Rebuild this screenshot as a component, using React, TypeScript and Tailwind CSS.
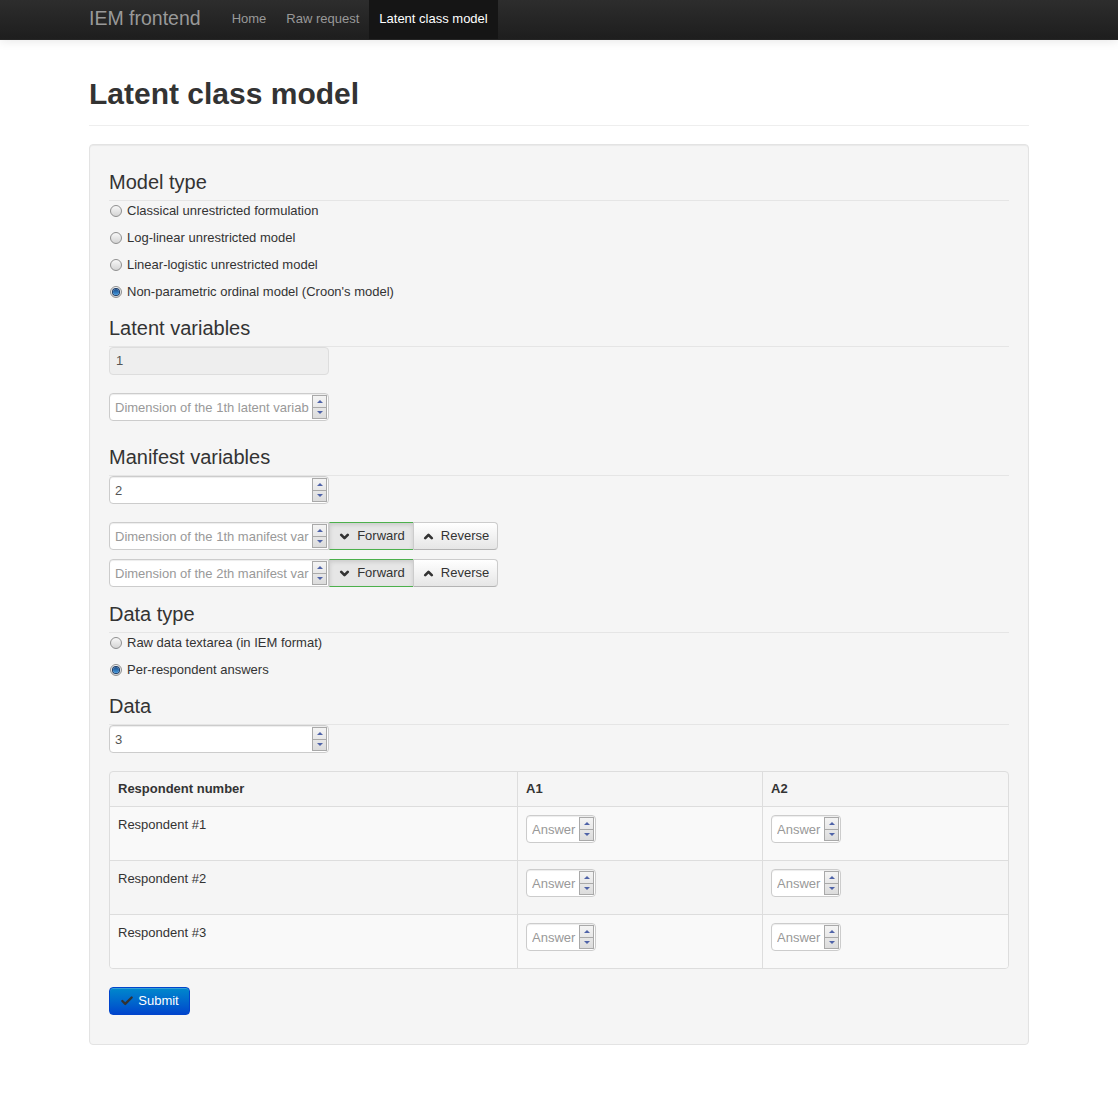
import React from "react";
import { ChevronDown, ChevronUp, Check } from "lucide-react";

const Spinner = () => (
  <div className="flex flex-col w-[15px] h-[24px] border border-[#a9a9a9] bg-gradient-to-b from-[#f4f4f4] to-[#dcdcdc] shrink-0">
    <div className="flex-1 flex items-center justify-center border-b border-[#a9a9a9]">
      <span className="w-0 h-0 border-l-[3px] border-r-[3px] border-b-[3px] border-l-transparent border-r-transparent border-b-[#4f63a8]" />
    </div>
    <div className="flex-1 flex items-center justify-center">
      <span className="w-0 h-0 border-l-[3px] border-r-[3px] border-t-[3px] border-l-transparent border-r-transparent border-t-[#4f63a8]" />
    </div>
  </div>
);

const NumberInput = ({
  value,
  placeholder,
  width = "w-[220px]",
  rounded = "rounded-[4px]",
}: {
  value?: string;
  placeholder?: string;
  width?: string;
  rounded?: string;
}) => (
  <div
    className={`flex items-center h-[28px] ${width} ${rounded} border border-[#cccccc] bg-white shadow-[inset_0_1px_1px_rgba(0,0,0,0.075)] shrink-0`}
  >
    <input
      type="text"
      defaultValue={value}
      placeholder={placeholder}
      className="flex-1 min-w-0 h-full pl-[5px] text-[13px] text-[#555] placeholder:text-[#999] bg-transparent outline-none"
    />
    <div className="mr-[1px]">
      <Spinner />
    </div>
  </div>
);

const Legend = ({
  children,
  gap = "",
}: {
  children: React.ReactNode;
  gap?: string;
}) => (
  <div
    className={`text-[20px] leading-[36px] text-[#333] border-b border-[#e5e5e5] ${gap}`}
  >
    {children}
  </div>
);

const Radio = ({ label, checked }: { label: string; checked?: boolean }) => (
  <label className="flex items-center h-[18px] mb-[9px] text-[13px] text-[#333]">
    <span className="ml-[1px] w-[12px] h-[12px] rounded-full border border-[#8f8f8f] bg-gradient-to-b from-[#f8f8f8] to-[#d4d4d4] flex items-center justify-center">
      {checked && (
        <span className="w-[6px] h-[6px] rounded-full bg-gradient-to-b from-[#1d4f8c] to-[#3f97de] shadow-[0_0_0_1px_#1a3b66]" />
      )}
    </span>
    <span className="ml-[5px]">{label}</span>
  </label>
);

const ManifestRow = ({ n }: { n: number }) => (
  <div className="flex h-[28px]">
    <NumberInput
      placeholder={`Dimension of the ${n}th manifest var`}
      rounded="rounded-l-[4px]"
    />
    <button className="w-[84px] h-[28px] flex items-center justify-center gap-[6px] bg-[#e6e6e6] border-y border-[#4cb04c] border-l border-l-[#cccccc] shadow-[inset_0_2px_4px_rgba(0,0,0,0.12)] text-[13px] text-[#333]">
      <ChevronDown size={13} strokeWidth={5} color="#333" />
      Forward
    </button>
    <button className="w-[85px] h-[28px] flex items-center justify-center gap-[6px] bg-gradient-to-b from-white to-[#e6e6e6] border border-[#cccccc] border-b-[#b3b3b3] rounded-r-[4px] text-[13px] text-[#333]">
      <ChevronUp size={13} strokeWidth={5} color="#333" />
      Reverse
    </button>
  </div>
);

export default function App() {
  const rows = [1, 2, 3];
  return (
    <div className="min-h-screen bg-white font-['Liberation_Sans',Arial,sans-serif]">
      <div className="h-[40px] bg-gradient-to-b from-[#2d2d2d] to-[#1e1e1e] border-b border-[#252525] shadow-[0_1px_10px_rgba(0,0,0,0.1)]">
        <div className="w-[940px] mx-auto flex h-full items-stretch">
          <div className="flex items-center text-[19.5px] text-[#999] mr-[21px] -mt-[2px]">
            IEM frontend
          </div>
          <div className="flex items-center px-[10px] text-[13px] text-[#999] -mt-[2px]">
            Home
          </div>
          <div className="flex items-center px-[10px] text-[13px] text-[#999] -mt-[2px]">
            Raw request
          </div>
          <div className="flex items-center px-[10px] text-[13px] text-white bg-[#151515] pb-[2px]">
            Latent class model
          </div>
        </div>
      </div>

      <div className="w-[940px] mx-auto">
        <div className="mt-[34px] pb-[11px] border-b border-[#eeeeee] mb-[18px]">
          <h1 className="text-[30px] leading-[40px] font-bold text-[#333]">
            Latent class model
          </h1>
        </div>

        <div className="bg-[#f5f5f5] border border-[#e3e3e3] rounded-[4px] p-[19px] pb-[29px] shadow-[inset_0_1px_1px_rgba(0,0,0,0.05)] mb-[60px]">
          <Legend gap="mb-[1px]">Model type</Legend>
          <Radio label="Classical unrestricted formulation" />
          <Radio label="Log-linear unrestricted model" />
          <Radio label="Linear-logistic unrestricted model" />
          <Radio label="Non-parametric ordinal model (Croon's model)" checked />

          <Legend>Latent variables</Legend>
          <div className="w-[220px] h-[28px] mb-[18px] rounded-[4px] border border-[#dddddd] bg-[#eeeeee] flex items-center pl-[6px] text-[13px] text-[#555]">
            1
          </div>
          <div className="mb-[18px]">
            <NumberInput placeholder="Dimension of the 1th latent variab" />
          </div>

          <Legend>Manifest variables</Legend>
          <div className="mb-[18px]">
            <NumberInput value="2" />
          </div>
          <div className="mb-[9px]">
            <ManifestRow n={1} />
          </div>
          <div className="mb-[9px]">
            <ManifestRow n={2} />
          </div>

          <Legend gap="mb-[1px]">Data type</Legend>
          <Radio label="Raw data textarea (in IEM format)" />
          <Radio label="Per-respondent answers" checked />

          <Legend>Data</Legend>
          <div className="mb-[18px]">
            <NumberInput value="3" />
          </div>

          <div className="border border-[#dddddd] rounded-[4px] overflow-hidden mb-[18px] text-[13px] text-[#333]">
            <div className="grid grid-cols-[407px_245px_1fr] h-[34px]">
              <div className="px-[8px] pt-[8px] leading-[18px] font-bold">
                Respondent number
              </div>
              <div className="px-[8px] pt-[8px] leading-[18px] font-bold border-l border-[#dddddd]">
                A1
              </div>
              <div className="px-[8px] pt-[8px] leading-[18px] font-bold border-l border-[#dddddd]">
                A2
              </div>
            </div>
            {rows.map((r) => (
              <div
                key={r}
                className={`grid grid-cols-[407px_245px_1fr] h-[54px] border-t border-[#dddddd] ${
                  r % 2 === 1 ? "bg-[#f9f9f9]" : "bg-[#f5f5f5]"
                }`}
              >
                <div className="px-[8px] pt-[9px] leading-[18px]">
                  Respondent #{r}
                </div>
                <div className="px-[8px] pt-[8px] border-l border-[#dddddd]">
                  <NumberInput placeholder="Answer" width="w-[70px]" />
                </div>
                <div className="px-[8px] pt-[8px] border-l border-[#dddddd]">
                  <NumberInput placeholder="Answer" width="w-[70px]" />
                </div>
              </div>
            ))}
          </div>

          <button className="h-[28px] w-[81px] flex items-center justify-center gap-[4px] rounded-[4px] border border-[#0044cc] bg-gradient-to-b from-[#0088cc] to-[#0044cc] text-white text-[13px] shadow-[inset_0_1px_0_rgba(255,255,255,0.2)]">
            <Check size={14} strokeWidth={4} color="#333" />
            Submit
          </button>
        </div>
      </div>
    </div>
  );
}
